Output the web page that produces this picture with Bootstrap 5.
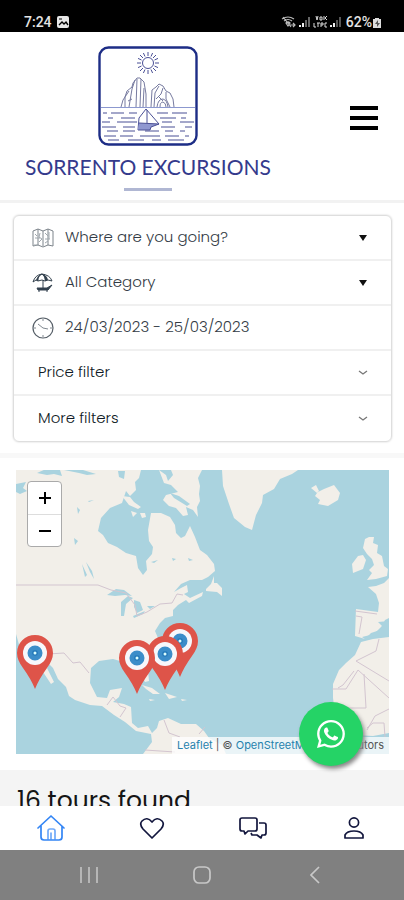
<!DOCTYPE html>
<html lang="en">
<head>
<meta charset="utf-8">
<meta name="viewport" content="width=device-width, initial-scale=1">
<title>Sorrento Excursions</title>
<link href="https://cdn.jsdelivr.net/npm/bootstrap@5.3.0/dist/css/bootstrap.min.css" rel="stylesheet">
<style>
  body { font-family: Poppins, Inter, sans-serif; color: #333b45; background: #fff; }
  svg { display: block; flex-shrink: 0; }
  .status-bar { background: #000; color: #e4e4e4; font: 500 14px/20px Roboto, sans-serif; padding: 12px 22px 0 24px; }
  .site-head { border-bottom: 3px solid #f2f2f2; padding: 13px 24px 9px 25px; }
  .brand-link { color: #343a8c; font: 400 21px/26px Lato, sans-serif; }
  .brand-name { margin-top: 7px; }
  .brand-rule { width: 48px; height: 3px; background: #b0b7d3; margin-top: 8px; }
  .search-area { padding: 12px 12px 11px 13px; border-bottom: 5px solid #f8f8f8; }
  .search-box { border: 1px solid #dedede; border-radius: 6px; box-shadow: 0 0 2px #ccc; }
  .search-row { height: 45px; padding: 0 22px 0 18px; border: 0; border-bottom: 2px solid #f0f0f0; gap: 11px; font-size: 15px; font-weight: 300; }
  .search-row:last-child { border-bottom: 0; }
  .search-row select, .search-row input { appearance: none; border: 0; background: transparent; color: inherit; font: inherit; padding: 0; min-width: 0; outline-offset: 4px; }
  button.search-row { background: transparent; color: #101a26; padding-left: 24px; }
  .map-area { padding: 12px 15px 16px 16px; }
  .map-canvas { width: 100%; height: auto; }
  .zoom-box { top: 11px; left: 11px; width: 35px; border: 1px solid #aaa; border-radius: 4px; background: #fff; }
  .zoom-box button { height: 32px; border: 0; background: transparent; color: #000; }
  .zoom-box button + button { border-top: 1px solid #ddd; }
  .map-credit { right: 0; bottom: 0; padding: 0 5px; background: rgba(255,255,255,.75); font: 400 11px/17px Inter, sans-serif; color: #555; }
  .map-credit a { color: #2682ad; text-decoration: none; }
  .results { background: #f4f4f4; padding: 12px 17px; color: #151515; }
  .results h1 { font-size: 25px; line-height: 38px; font-weight: 400; }
  .chat-fab { right: 41px; bottom: 134px; width: 64px; height: 64px; background: #25d366; color: #fff; box-shadow: 2px 3px 4px #888; z-index: 5; }
  .page-scroll { scrollbar-width: none; min-height: 0; }
  .page-scroll::-webkit-scrollbar { display: none; }
  .tab-bar { height: 44px; background: #fff; color: #12163d; }
  .tab-bar a { color: inherit; }
  .tab-bar a.current { color: #3385f5; }
  .system-bar { height: 50px; background: #808080; padding: 0 32px; }
  .system-bar button { border: 0; background: transparent; color: #c8c8c8; }
</style>
<script src="https://cdn.jsdelivr.net/npm/bootstrap@5.3.0/dist/js/bootstrap.bundle.min.js"></script>
</head>
<body class="vh-100 d-flex flex-column overflow-hidden">

<div class="status-bar d-flex align-items-center justify-content-between">
  <div class="d-flex align-items-center gap-1">
    <span>7:24</span>
    <svg width="14" height="14" viewBox="0 0 14 14"><rect x="1" y="1" width="12" height="12" rx="2" fill="#e8e8e8"/><path d="M3 10l3-3 2 2 2-2 2 3" fill="none" stroke="#000" stroke-width="1.4"/><path d="M3 4h3" stroke="#000"/></svg>
  </div>
  <div class="d-flex align-items-center gap-1">
    <svg width="62" height="14" viewBox="0 0 60 14" fill="none" stroke="#bbb">
      <path d="M1 4q6-4 12 0M3 6q4-3 8 0M5 8q2-2 4 0l-2 3zM9 10h5m-2-2l2 2-2 2M2 2l8 10" stroke-width="1.2"/>
      <path d="M19 12v-2m3 2V8" stroke="#eee" stroke-width="2"/><path d="M25 12V5m3 7V2" stroke="#666" stroke-width="2"/>
      <path d="M35 1l1 4 1-4m2 1h2v3h-2zm4-1v4m3-4l-2 2 2 2M33 8v4h2m2-4v4m-1-4h3m1 0v4m0-4h2v2h-2m6-2h-2v4h2" stroke="#ddd"/>
      <path d="M50 12v-2m3 2V8" stroke="#eee" stroke-width="2"/><path d="M56 12V5m3 7V2" stroke="#555" stroke-width="2"/>
    </svg>
    <span class="d-flex align-items-center">62%<svg width="10" height="13" viewBox="0 0 10 13"><path d="M3 2h4v1h2v9H1V3h2z" fill="#ddd"/><path d="M6 4L3 8h2v3l3-4H6z" fill="#555"/></svg></span>
  </div>
</div>

<div class="page-scroll flex-grow-1 overflow-auto">
  <header class="site-head d-flex align-items-center justify-content-between">
    <a href="#" class="brand-link text-decoration-none d-flex flex-column align-items-center">
      <svg width="100" height="102" viewBox="0 0 100 102" fill="none" stroke="#4b5096">
        <rect x="1.5" y="2.500" width="97" height="97" rx="9" stroke="#1d2d86" stroke-width="2.400"/>
        <g transform="translate(50 18)" stroke-width="1">
          <circle r="5.500"/>
          <path d="M0-7V-11M0 7v4M-7 0h-4M7 0h4M5-5l3-3M-5-5l-3-3M5 5l3 3M-5 5l-3 3M3-6.500l1.600-3.500M-3-6.500l-1.600-3.500M3 6.500l1.600 3.500M-3 6.500l-1.600 3.500M6.500-3l3.500-1.600M-6.500-3l-3.500-1.600M6.500 3l3.500 1.600M-6.500 3l-3.500 1.600"/>
        </g>
        <path d="M23 62l2-7 2-3 2-6 5-4 1-4 4-5 3 0 4 4 2 12 0 13M27 62l0-10 4-6M31 62l3-18 3-9M38 62l1-28M42 62l1-28M34 54l-4 2M46 43l-1 19M53 62l1-17 4-3 3-3 4 2 3 5 4 2 3 6 1 8M56 62l1-14 4-7M58 54l5-5 2-6M61 52l4 4M68 47l0 7 4 8M59 62q1-8 6-8 4 1 5 8M62 62q0-5 3-5 3 1 3 5" stroke-width="1" stroke="#777ba0"/>
        <path d="M3 62.500h94" stroke="#8c98cf"/>
        <path d="M48 64l-7 9-1 12M48 64l13 15M49 65v13" stroke-width="1"/>
        <path d="M41 78l20 1-8 3-1 3h-12" fill="#8f97d0"/>
        <path d="M5 68h4m4 0h13m5 0h8m20 0h11m4 0h15M10 73h5m8 0h14m25 0h16m5 0h5M4 77h8m7 0h20m25 0h10m8 0h14M4 82h14m7 0h12m26 0h14m10 0h7M9 86h11m5 0h12m10 0h14m6 0h8m7 0h5M6 91h12m4 0h13m7 0h20m5 0h14m6 0h4M10 95h11m9 0h16m8 0h9m7 0h16" stroke-width="1.200"/>
      </svg>
      <span class="brand-name">SORRENTO EXCURSIONS</span>
      <span class="brand-rule"></span>
    </a>
    <button type="button" class="btn p-0 border-0" aria-label="Open menu">
      <svg width="30" height="26" viewBox="0 0 30 26" fill="#000"><path d="M0 1h28v4H0zM0 11h28v4H0zM0 21h28v4H0z"/></svg>
    </button>
  </header>

  <form class="search-area">
    <div class="search-box">
      <div class="search-row d-flex align-items-center">
        <svg width="22" height="20" viewBox="0 0 22 20" fill="none" stroke="#7d848b"><path d="M1 3l5-2 5 2 5-2 5 2v15l-5-1-5 2-5-2-5 1zM6 1v16M11 3v15M16 1v16"/><path d="M3 6l2 2m3-3l-1 4 3 2-3 3m-4-4l5 0m5-5l3 3m-3 3h5m-5 4l3-2m1-9v7m-15 6h4" stroke="#a0a8ae"/></svg>
        <select class="flex-grow-1" aria-label="Destination"><option>Where are you going?</option></select>
        <svg width="12" height="8" viewBox="0 0 12 8"><path d="M2 1h8L6 7z" fill="#111"/></svg>
      </div>
      <div class="search-row d-flex align-items-center">
        <svg width="22" height="22" viewBox="0 0 22 22" fill="none" stroke="#33414e"><path d="M1 10Q3 3 10 2q8 1 10 7l-4-1-3 1-3-1-4 1-2-1zM10 2Q5 4 6 9M10 2q4 2 4 7M11 8v8"/><path d="M10 2q5 1 6 6l-3 1q0-4-3-7M10 2Q6 3 4 8l2 1q0-4 4-7" fill="#33414e" stroke="none"/><path d="M5 16h10l5-3-4 5H6zM7 18v2m8-2v2" fill="#33414e"/></svg>
        <select class="flex-grow-1" aria-label="Category"><option>All Category</option></select>
        <svg width="12" height="8" viewBox="0 0 12 8"><path d="M2 1h8L6 7z" fill="#111"/></svg>
      </div>
      <div class="search-row d-flex align-items-center">
        <svg width="22" height="22" viewBox="0 0 22 22" fill="none" stroke="#555e67"><circle cx="11" cy="11" r="10" stroke-width="1.200"/><path d="M6 7l5 4 5 1M11 2v2M11 18v2M2 11h2M18 11h2" stroke="#808890"/></svg>
        <input class="flex-grow-1" type="text" value="24/03/2023 - 25/03/2023" aria-label="Dates">
      </div>
      <button type="button" class="search-row w-100 d-flex align-items-center justify-content-between">Price filter
        <svg width="12" height="8" viewBox="0 0 12 8" fill="none" stroke="#777" stroke-width="1.300"><path d="M2 2l4 3 4-3"/></svg></button>
      <button type="button" class="search-row w-100 d-flex align-items-center justify-content-between">More filters
        <svg width="12" height="8" viewBox="0 0 12 8" fill="none" stroke="#777" stroke-width="1.300"><path d="M2 2l4 3 4-3"/></svg></button>
    </div>
  </form>

  <section class="map-area" aria-label="Tour map">
    <div class="position-relative overflow-hidden">
      <svg class="map-canvas" viewBox="16 470 373 284">
        <defs>
          <g id="tour-pin"><path d="M0 54Q-4 44-12 33Q-18 25-18 18A18 18 0 0 1 18 18Q18 25 12 33Q4 44 0 54z" fill="#de5449"/><circle cy="18" r="12" fill="#f7f7fb"/><circle cy="18" r="5" fill="#fff" stroke="#3c8dc9" stroke-width="5"/><circle cy="18" r="3" fill="#2379ba"/><circle cy="18" r="1.500" fill="#dff"/></g>
        </defs>
        <rect x="16" y="470" width="373" height="284" fill="#aad3df"/>
        <g fill="#f2efe9">
          <!-- North and Central America -->
          <path d="M16 470H141L139 478 135 482 136 490 130 496 126 491 122 503 110 508 101 518 98 531 103 535 108 543 117 547 126 553 136 556 138 568 143 575 147 570 146 561 152 554 153 547 149 541 148 530 151 513 161 513 170 517 175 525 176 533 181 538 185 536 190 526 195 537 200 550 207 555 214 564 215 571 208 577 202 580 190 580 181 584 174 592 181 588 187 585 188 592 184 594 190 598 203 592 202 596 189 603 186 600 178 605 173 610 173 616 165 618 160 623 155 631 158 638 150 650 143 660 148 671 149 681 145 682 139 672 137 664 129 661 120 661 113 659 99 661 91 668 90 683 97 697 107 698 110 690 122 688 119 697 113 702 124 704 131 707 132 723 138 728 148 726 152 733 157 728 159 721 168 718 181 724 196 724 204 731 209 738 222 745 226 754H143L152 742 151 734 136 731 125 722 114 715 102 706 90 705 75 700 69 696 66 687 58 679 53 668 49 664 47 668 54 682 51 684 43 672 34 662 20 648 16 634z"/>
          <!-- Baffin Island and neighbours -->
          <path d="M159 470l7 5 2 6 5-6-2-5h31l-4 8 2 8-1 8 1 7-3 6 1 10-5-7-7-3 2 8-5 1-7-8-7-2-6-6 3-5 12-3-7-7-7-2zM122 496l8 1 4 5 7 5-3 2-9-4zM131 511l6 2-4 4zM140 513l5 0 1 4-4 1z"/>
          <!-- Newfoundland -->
          <path d="M214 576l-3 8-5 5 0 2 11 1 5 4 0-8-5-5-3 0z"/>
          <!-- Greenland -->
          <path d="M222 470l1 16 6 18 5 14 11 9 7 3 4-15 6-12 1-8 11-6 6-10 12-5 6-4z"/>
          <!-- Iceland -->
          <path d="M311 488l5-3 3 6-3 2 8-4 10-4 6 8-2 7-10 6-10-2 2-4-5-4 2-3z"/>
          <!-- British Isles -->
          <path d="M365 539l4-2 5 0-1 6 5 2-1 8 5 3 2 10 4 3-1 7-11 3-9 1 5-7-3-3 5-5-2-6-5-5-4-6zM358 556l5-1 3 5-3 9-10 4-1-9z"/>
          <!-- France and Iberia -->
          <path d="M389 578l-5 5-8 3-8 1 8 7 3 9-1 9-22-3-1 27 10 3 6-6 9-3 5-10 4-2z"/>
          <!-- North-west Africa -->
          <path d="M389 637l-16 2-12 3-6 13-9 8-7 7-6 14 0 14 2 15 9 11 12 11 17 1 16-3z"/>
          <!-- Caribbean islands -->
          <path d="M142 685l10 3 8 6-7 0-7-5zM165 693l12 4-8 2zM149 699l6 1-5 1zM181 699l6 1-5 1z"/>
        </g>
        <g fill="#aad3df">
          <path d="M37 473l9-4 14 1 2 6-8-2-7 1zM64 470l19 0 13 4-9 1-8-2zM118 471h7l-1 8-5-2zM170 493l9 3 11 8-3 2-13-8zM378 622l11-1v8l-12 8-11 3-4-3 12-3 8-8zM107 595l9-6 8 1 8 6-7-1-10 1zM128 596l5 2-7 6-2 12-3 0 0-14zM134 600l6 2 3 8-6 3-3-6zM133 616l12-5-2 3-9 4zM147 606l8 0-5 3zM82 564l5 11-2 2zM86 562l6 9 2 8-4-7zM16 484l10-2-3 6 4 3-7 3-4-2z"/>
          <path d="M77 507l3 3-2 4zM74 538l4 3-3 4zM88 501l6-1-5 2zM151 562l7-2-4 3zM172 558l4 1-3 2zM188 558l5 2-4 1z"/>
        </g>
        <g fill="none" stroke="#d3c5d0">
          <path d="M16 585H98l13 5 15 3 9 12 2 11 10-4 13-8 12-1 5-9 6 1M48 654l16-1 9 10 7-1 9 11M107 705l6-8 7 9 6 2-6 9M164 720l5 13 11 4M199 734l6-7M145 750l30 2M355 611l22 3M356 616l6 1-3 17M389 681l-33-20 20-10 3-12M354 671l-11 14-5 3M332 689h14l12-19 31 28M364 674l2 34h-20M367 730l8-14 14-7M367 728l6-5 11 0 1 14"/>
        </g>
        <use href="#tour-pin" x="180" y="623"/><use href="#tour-pin" x="35" y="635"/><use href="#tour-pin" x="165" y="636"/><use href="#tour-pin" x="137" y="640"/>
      </svg>
      <div class="zoom-box position-absolute d-flex flex-column">
        <button type="button" class="d-flex align-items-center justify-content-center" aria-label="Zoom in"><svg width="12" height="12" viewBox="0 0 12 12"><path d="M6 0v12M0 6h12" stroke="#000" stroke-width="2"/></svg></button>
        <button type="button" class="d-flex align-items-center justify-content-center" aria-label="Zoom out"><svg width="12" height="12" viewBox="0 0 12 12"><path d="M0 6h12" stroke="#000" stroke-width="2"/></svg></button>
      </div>
      <div class="map-credit position-absolute text-nowrap"><a href="#">Leaflet</a> | © <a href="#">OpenStreetMap</a> contributors</div>
    </div>
  </section>

  <section class="results"><h1 class="m-0">16 tours found</h1></section>
</div>

<a href="#" class="chat-fab position-fixed rounded-circle d-flex align-items-center justify-content-center" aria-label="Chat on WhatsApp">
  <svg width="28" height="28" viewBox="0 0 16 16" fill="currentColor"><path d="M13.601 2.326A7.854 7.854 0 0 0 7.994 0C3.627 0 .068 3.558.064 7.926c0 1.399.366 2.760 1.057 3.965L0 16l4.204-1.102a7.933 7.933 0 0 0 3.790.965h.004c4.368 0 7.926-3.558 7.930-7.930A7.898 7.898 0 0 0 13.600 2.326zM7.994 14.521a6.573 6.573 0 0 1-3.356-.920l-.240-.144-2.494.654.666-2.433-.156-.251a6.560 6.560 0 0 1-1.007-3.505c0-3.626 2.957-6.584 6.591-6.584a6.560 6.560 0 0 1 4.660 1.931 6.557 6.557 0 0 1 1.928 4.660c-.004 3.639-2.961 6.592-6.592 6.592zm3.615-4.934c-.197-.099-1.170-.578-1.353-.646-.182-.065-.315-.099-.445.099-.133.197-.513.646-.627.775-.114.133-.232.148-.430.050-.197-.100-.836-.308-1.592-.985-.590-.525-.985-1.175-1.103-1.372-.114-.198-.011-.304.088-.403.087-.088.197-.232.296-.346.100-.114.133-.198.198-.330.065-.134.034-.248-.015-.347-.050-.099-.445-1.076-.612-1.470-.160-.389-.323-.335-.445-.340-.114-.007-.247-.007-.380-.007a.729.729 0 0 0-.529.247c-.182.198-.691.677-.691 1.654 0 .977.710 1.916.810 2.049.098.133 1.394 2.132 3.383 2.992.470.205.840.326 1.129.418.475.152.904.129 1.246.080.380-.058 1.171-.480 1.338-.943.164-.464.164-.860.114-.943-.049-.084-.182-.133-.380-.232z"/></svg>
</a>

<nav class="tab-bar row g-0 align-items-center flex-shrink-0" aria-label="Main">
  <a href="#" class="col d-flex justify-content-center current" aria-label="Home"><svg width="30" height="28" viewBox="0 0 30 28" fill="none" stroke="currentColor" stroke-width="1.700" stroke-linejoin="round" stroke-linecap="round"><path d="M2 14L15 2l13 12M5 12v11q0 3 3 3h15q3 0 3-3V12"/><path d="M12 25v-8q0-2 2-2h3q2 0 2 2v8M15 19v6" opacity=".7"/></svg></a>
  <a href="#" class="col d-flex justify-content-center" aria-label="Favourites"><svg width="26" height="24" viewBox="0 0 26 24" fill="none" stroke="currentColor" stroke-width="1.700" stroke-linejoin="round"><path d="M13 22L4 13Q0 8 3 5q5-5 10 1 5-6 10-1 3 3-1 8z"/></svg></a>
  <a href="#" class="col d-flex justify-content-center" aria-label="Messages"><svg width="28" height="24" viewBox="0 0 28 24" fill="none" stroke="currentColor" stroke-width="1.700" stroke-linejoin="round"><path d="M3 2h13q2 0 2 2v9q0 2-2 2H9l-3 3-1-3H3q-2 0-2-2V4q0-2 2-2zM20 7h5q2 0 2 2v8q0 2-2 2h-2l-1 3-4-3h-5l-1-2"/></svg></a>
  <a href="#" class="col d-flex justify-content-center" aria-label="Profile"><svg width="20" height="24" viewBox="0 0 20 24" fill="none" stroke="currentColor" stroke-width="1.700" stroke-linejoin="round"><circle cx="10" cy="6.500" r="4.600"/><path d="M1 22v-3q2-4 9-4t9 4v3z"/></svg></a>
</nav>

<div class="system-bar flex-shrink-0">
  <div class="row g-0 h-100">
    <button type="button" class="col d-flex align-items-center justify-content-center" aria-label="Recent apps"><svg width="18" height="18" viewBox="0 0 18 18" stroke="currentColor" stroke-width="1.500"><path d="M1 1v16M9 1v16M17 1v16"/></svg></button>
    <button type="button" class="col d-flex align-items-center justify-content-center" aria-label="Home screen"><svg width="18" height="18" viewBox="0 0 18 18" fill="none" stroke="currentColor" stroke-width="1.700"><rect x="1" y="1" width="16" height="16" rx="5"/></svg></button>
    <button type="button" class="col d-flex align-items-center justify-content-center" aria-label="Back"><svg width="10" height="18" viewBox="0 0 10 18" fill="none" stroke="currentColor" stroke-width="1.700"><path d="M9 1L1 9l8 8"/></svg></button>
  </div>
</div>
</body>
</html>
